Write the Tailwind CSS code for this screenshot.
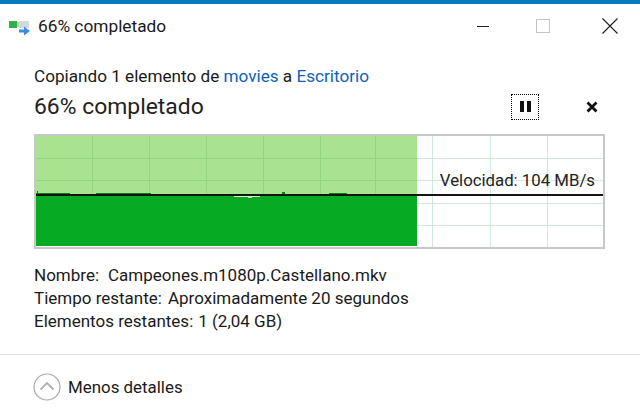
<!DOCTYPE html>
<html>
<head>
<meta charset="utf-8">
<script src="https://cdn.jsdelivr.net/npm/@tailwindcss/browser@4"></script>
</head>
<body class="m-0 bg-white">
<div class="w-[640px] h-[416px] overflow-hidden bg-white flex flex-col font-['Roboto','Open_Sans',sans-serif] text-[#1a1a1a]">
  <div class="h-[4px] bg-[#0a78bd] shrink-0"></div>
  <div class="h-[44px] shrink-0 flex items-center pl-[9px] pr-[22px]">
    <svg class="w-[22px] h-[20px] shrink-0" viewBox="0 0 22 20">
      <rect x="0" y="5" width="8" height="7" fill="#2fb04a"/>
      <rect x="8" y="6" width="3" height="5" fill="#a8dba0"/>
      <rect x="10" y="5" width="10" height="7" fill="#d6d9dc"/>
      <path d="M10 13.500h5v-3l6 4.500-6 4.500v-3h-5z" fill="#3b8de0"/>
    </svg>
    <span class="ml-[7px] text-[17.300px] leading-[20px]">66% completado</span>
    <div class="ml-auto flex items-center">
      <div class="w-[12px] h-[1px] bg-[#222] mr-[47px]"></div>
      <div class="w-[14px] h-[14px] border border-[#c4c4c4] mr-[52px]"></div>
      <svg class="w-[16px] h-[16px]" viewBox="0 0 16 16"><path d="M.5.5l15 15M15.500.5l-15 15" stroke="#222" stroke-width="1.200" fill="none"/></svg>
    </div>
  </div>
  <div class="pl-[34px] mt-[18px] text-[17.150px] leading-[20px] h-[20px]">Copiando 1 elemento de <span class="text-[#0f5fb8]">movies</span> a <span class="text-[#0f5fb8]">Escritorio</span></div>
  <div class="pl-[34px] pr-[42px] flex items-center mt-[2px] h-[37px]">
    <span class="text-[22.900px] leading-[28px] text-[#222]">66% completado</span>
    <div class="ml-auto flex items-center">
      <div class="w-[28px] h-[26px] border border-dotted border-black flex items-center justify-center gap-[3px] mr-[47px]">
        <div class="w-[4px] h-[11px] bg-[#111]"></div><div class="w-[4px] h-[11px] bg-[#111]"></div>
      </div>
      <svg class="w-[12px] h-[12px]" viewBox="0 0 12 12"><path d="M1.500 1.500l9 9M10.500 1.500l-9 9" stroke="#111" stroke-width="2.800" fill="none"/></svg>
    </div>
  </div>
  <div class="relative ml-[34px] w-[571px] h-[115px] mt-[9px] shrink-0 border-2 border-[#c8c8c8] bg-white">
    <svg class="absolute inset-0" width="567" height="111" viewBox="0 0 567 111">
      <g stroke="#cfeadb" stroke-width="1">
        <path d="M396.500 0v111M454.500 0v111M511.500 0v111M0 22.500h567M0 44.500h567M0 67.500h567M0 89.500h567"/>
      </g>
      <rect x="0" y="0" width="381" height="110" fill="#a8e48f"/>
      <g stroke="#93d480" stroke-width="1">
        <path d="M56.500 0v60M113.500 0v60M170.500 0v60M227.500 0v60M284.500 0v60M339.500 0v60M0 22.500h381M0 44.500h381"/>
      </g>
      <rect x="0" y="60" width="381" height="50" fill="#06ab23"/>
      <path d="M0 57h1v-2h1v2h32v1h-34zM60 57h55v1h-55zM293 57h18v1h-18zM246 56h3v2h-3z" fill="#0c7a1e"/>
      <path d="M198 60h26v1h-8v1h-4v-1h-14z" fill="#d8f5d0"/>
      <rect x="0" y="58" width="567" height="2" fill="#141414"/>
    </svg>
    <span class="absolute right-[8px] top-[34px] text-[16.800px] leading-[20px] text-[#222]">Velocidad: 104 MB/s</span>
  </div>
  <div class="pl-[34px] mt-[15px] text-[17px] leading-[23px]">
    <div class="flex gap-[9px]"><span>Nombre:</span><span>Campeones.m1080p.Castellano.mkv</span></div>
    <div class="flex gap-[6px]"><span>Tiempo restante:</span><span>Aproximadamente 20 segundos</span></div>
    <div class="flex gap-[5px]"><span>Elementos restantes:</span><span>1 (2,04 GB)</span></div>
  </div>
  <div class="mt-[21px] border-t border-[#dfdfdf] pl-[33px] pt-[18px] flex items-center">
    <svg class="w-[28px] h-[28px] shrink-0" viewBox="0 0 28 28">
      <circle cx="14" cy="14" r="13" fill="#fff" stroke="#a9a9a9" stroke-width="1.200"/>
      <path d="M7.500 16.500l6.500-6.500 6.500 6.500" fill="none" stroke="#b0b0b0" stroke-width="1.800"/>
    </svg>
    <span class="ml-[7px] text-[16.900px] leading-[20px]">Menos detalles</span>
  </div>
</div>
</body>
</html>
